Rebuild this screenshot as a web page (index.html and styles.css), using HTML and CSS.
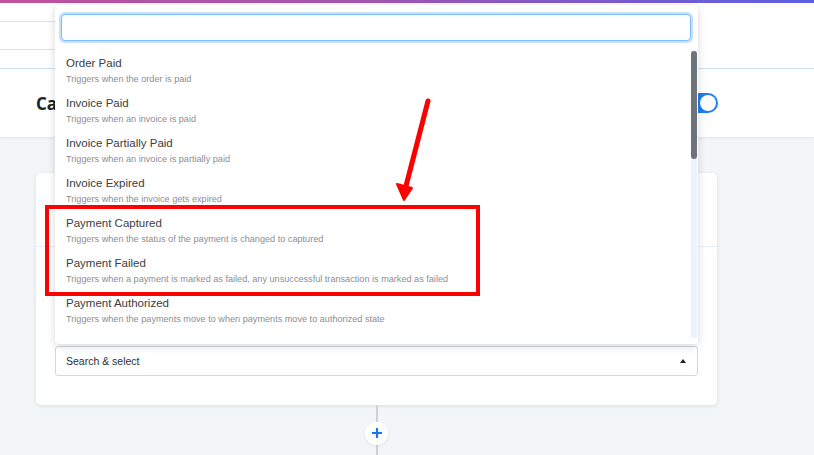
FILE: index.html
```html
<!DOCTYPE html>
<html lang="en">
<head>
    <meta charset="UTF-8">
    <meta name="viewport" content="width=device-width, initial-scale=1.0">
    <title>Workflow trigger</title>
    <link rel="stylesheet" href="styles.css">
</head>
<body>
    <div class="topbar"></div>

    <div class="subnav">
        <div class="subnav-row"></div>
        <div class="subnav-row tall"></div>
    </div>

    <div class="pagehead">
        <h1>Capture Payment Workflow</h1>
        <span class="toggle"><span class="knob"></span></span>
    </div>

    <div class="canvas">
        <div class="card">
            <div class="card-head"></div>
            <div class="card-body">
                <div class="select">
                    <span>Search &amp; select</span>
                    <span class="caret"></span>
                </div>
            </div>
        </div>
        <div class="connector">
            <span class="add-step">
                <svg width="12" height="12" viewBox="0 0 12 12"><path d="M6 1v10M1 6h10" stroke="#1a73f0" stroke-width="2.2" fill="none"/></svg>
            </span>
        </div>
    </div>

    <!-- open trigger menu -->
    <div class="menu">
        <input class="menu-search" type="text">
        <div class="menu-scroll">
            <ul class="menu-list">
                <li><div class="item-title">Order Paid</div><div class="item-desc">Triggers when the order is paid</div></li>
                <li><div class="item-title">Invoice Paid</div><div class="item-desc">Triggers when an invoice is paid</div></li>
                <li><div class="item-title">Invoice Partially Paid</div><div class="item-desc">Triggers when an invoice is partially paid</div></li>
                <li><div class="item-title">Invoice Expired</div><div class="item-desc">Triggers when the invoice gets expired</div></li>
                <li><div class="item-title">Payment Captured</div><div class="item-desc">Triggers when the status of the payment is changed to captured</div></li>
                <li><div class="item-title">Payment Failed</div><div class="item-desc">Triggers when a payment is marked as failed, any unsuccessful transaction is marked as failed</div></li>
                <li><div class="item-title">Payment Authorized</div><div class="item-desc">Triggers when the payments move to when payments move to authorized state</div></li>
                <li><div class="item-title">Payment Refunded</div><div class="item-desc">Triggers when a payment is refunded</div></li>
            </ul>
            <div class="scrolltrack"><div class="thumb"></div></div>
        </div>
    </div>

    <!-- annotation -->
    <div class="highlight"></div>
    <svg class="arrow" width="40" height="110" viewBox="0 0 40 110">
        <path d="M35 3 L13 88" stroke="#ff0000" stroke-width="5" stroke-linecap="round" fill="none"/>
        <path d="M4 86 L19 90 L11 102 Z" fill="#ff0000" stroke="#ff0000" stroke-width="2" stroke-linejoin="round"/>
    </svg>
</body>
</html>
```

FILE: styles.css
```css
body {
    margin: 0;
    background: #f3f6f9;
    font-family: "Liberation Sans", Arial, sans-serif;
    color: #333;
    overflow: hidden;
    height: 455px;
}
.topbar {
    height: 3px;
    background: linear-gradient(90deg, #c2519c, #a457b3 45%, #5c5fe3);
}
.subnav {
    height: 65px;
    background: #fff;
    border-bottom: 1px solid #d3e2f6;
}
.subnav-row {
    width: 360px;
    height: 18px;
    border-bottom: 1px solid #dde1e7;
}
.subnav-row.tall {
    height: 27px;
}
.pagehead {
    height: 68px;
    background: #fff;
    display: flex;
    align-items: center;
    justify-content: space-between;
    padding: 0 96px 0 36px;
    box-shadow: 0 1px 3px rgba(0, 0, 0, 0.07);
    position: relative;
}
h1 {
    margin: 0;
    font-family: "Open Sans", sans-serif;
    font-size: 17px;
    font-weight: 700;
    color: #1e2227;
}
.toggle {
    width: 36px;
    height: 20px;
    border-radius: 10px;
    background: #1b7ef5;
    display: flex;
    align-items: center;
    justify-content: flex-end;
    padding: 0 2px;
    box-sizing: border-box;
}
.knob {
    width: 16px;
    height: 16px;
    border-radius: 50%;
    background: #fff;
}
.canvas {
    padding: 36px 0 0 36px;
}
.card {
    width: 681px;
    height: 232px;
    background: #fff;
    border-radius: 5px;
    box-shadow: 0 1px 4px rgba(30, 40, 60, 0.12);
    display: flex;
    flex-direction: column;
}
.card-head {
    height: 73px;
    border-bottom: 1px solid #e4edf8;
}
.card-body {
    flex: 1;
    display: flex;
    flex-direction: column;
    justify-content: flex-end;
    padding: 0 19px 29px;
}
.select {
    height: 28px;
    border: 1px solid #d3d8df;
    border-radius: 3px;
    display: flex;
    align-items: center;
    justify-content: space-between;
    padding: 0 11px 0 10px;
    font-size: 10.5px;
    color: #2b2f33;
}
.caret {
    width: 0;
    height: 0;
    border-left: 3.5px solid transparent;
    border-right: 3.5px solid transparent;
    border-bottom: 4px solid #222;
}
.connector {
    width: 681px;
    height: 56px;
    display: flex;
    justify-content: center;
    align-items: center;
    background: linear-gradient(#cdd2d9, #cdd2d9) center / 2px 100% no-repeat;
}
.add-step {
    width: 23px;
    height: 23px;
    border-radius: 50%;
    background: #fff;
    box-shadow: 0 1px 3px rgba(0, 0, 0, 0.08);
    display: flex;
    align-items: center;
    justify-content: center;
}
.menu {
    position: absolute;
    left: 55px;
    top: 5px;
    width: 643px;
    height: 339px;
    background: #fff;
    border-radius: 4px;
    box-shadow: 0 2px 8px rgba(0, 0, 0, 0.16);
    padding: 9px 1px 0 6px;
    box-sizing: border-box;
}
.menu-search {
    display: block;
    width: 630px;
    height: 27px;
    box-sizing: border-box;
    border: 1px solid #80bdff;
    border-radius: 4px;
    box-shadow: 0 0 0 2px rgba(0, 123, 255, 0.22);
    outline: none;
    margin: 0;
}
.menu-scroll {
    display: flex;
    margin-top: 9px;
    height: 288px;
    overflow: hidden;
}
.menu-list {
    list-style: none;
    margin: 0;
    padding: 0;
    flex: 1;
}
.menu-list li {
    height: 40px;
    padding: 5px 5px 3px;
    box-sizing: border-box;
}
.item-title {
    font-size: 11.5px;
    line-height: 17px;
    color: #3a3d41;
}
.item-desc {
    font-size: 9.15px;
    line-height: 14px;
    color: #8a8f96;
}
.scrolltrack {
    width: 6px;
    background: #eaf2fc;
}
.thumb {
    height: 108px;
    margin-top: 1px;
    background: #6c737a;
    border-radius: 3px;
}
.highlight {
    position: absolute;
    left: 45px;
    top: 205px;
    width: 435px;
    height: 91px;
    border: 4px solid #ff0000;
    box-sizing: border-box;
}
.arrow {
    position: absolute;
    left: 393px;
    top: 98px;
}
```
